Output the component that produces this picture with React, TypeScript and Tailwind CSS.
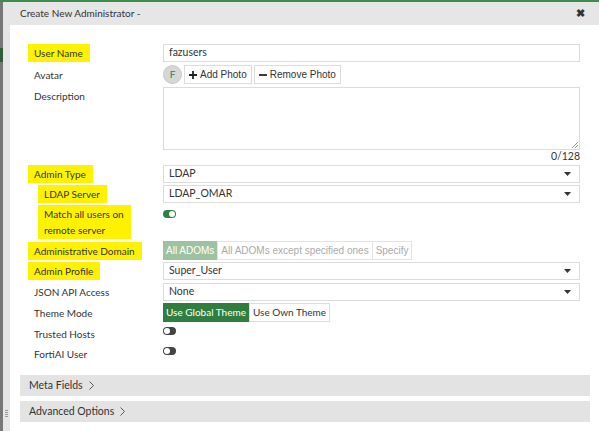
import React from 'react';

const lato = { fontFamily: 'Lato, "Liberation Sans", sans-serif' };
const arial = { fontFamily: '"Liberation Sans", Arial, sans-serif' };

function Label({ text, hl, indent }: { text: React.ReactNode; hl?: boolean; indent?: boolean }) {
  return (
    <div className={`w-[129px] shrink-0 text-[10px] ${indent ? 'pl-[10px]' : ''}`}>
      <span className={`inline-block leading-[16px] ${hl ? 'bg-[#fff200] -ml-[6px] pl-[6px] pr-[7px] py-[1px]' : ''}`}>
        {text}
      </span>
    </div>
  );
}

function Select({ value }: { value: string }) {
  return (
    <div className="flex-1 h-[18px] border border-[#dcdcdc] bg-white flex items-center justify-between pl-[5px] pr-[8px] text-[#333]">
      <span>{value}</span>
      <svg width="7" height="4" viewBox="0 0 7 4"><path d="M0 0h7L3.5 4z" fill="#333" /></svg>
    </div>
  );
}

function Toggle({ on }: { on?: boolean }) {
  return (
    <div className={`w-[13px] h-[8px] rounded-full flex items-center px-[1px] ${on ? 'bg-[#2e8040] justify-end' : 'bg-[#444] justify-start'}`}>
      <div className="w-[6px] h-[6px] rounded-full bg-white" />
    </div>
  );
}

export default function App() {
  return (
    <div className="w-[599px] h-[431px] overflow-hidden bg-[#6c6c6c] relative text-[10.5px] text-[#333]" style={lato}>
      <div className="h-[2px] bg-[#3d8c4c]" />
      <div className="flex h-[429px]">
        <div className="w-[3px] flex flex-col">
          <div className="h-[46px] bg-[#777]" />
          <div className="h-[14px] bg-[#2f5f3a]" />
          <div className="flex-1 bg-[#777]" />
        </div>
        <div className="flex-1 flex flex-col bg-[#e6e6e6]">
          <div className="h-[23px] flex items-center justify-between pl-[17px] pr-[14px] text-[10px] text-[#333]">
            <span>Create New Administrator -</span>
            <span className="text-[11px] font-bold" style={arial}>✖</span>
          </div>
          <div className="flex flex-1">
            <div className="w-[7px] flex flex-col items-center justify-end pb-[14px]">
              <div className="flex flex-col gap-[1px]">
                <div className="w-[3px] h-[1px] bg-[#999]" />
                <div className="w-[3px] h-[1px] bg-[#999]" />
                <div className="w-[3px] h-[1px] bg-[#999]" />
                <div className="w-[3px] h-[1px] bg-[#999]" />
              </div>
            </div>
            <div className="flex-1 bg-white pt-[19px]">
              <div className="pl-[24px] pr-[19px] flex flex-col">
                <div className="flex items-center h-[18px]">
                  <Label text="User Name" hl />
                  <div className="flex-1 h-[18px] border border-[#dcdcdc] flex items-center pl-[5px]">fazusers</div>
                </div>
                <div className="flex items-center h-[19px] mt-[3px]">
                  <Label text="Avatar" />
                  <div className="flex items-center gap-[2px] text-[10px]" style={arial}>
                    <div className="w-[19px] h-[19px] rounded-full bg-[#d6d6d6] border border-[#c8c8c8] flex items-center justify-center text-[#3c7d4a] text-[10px]" style={lato}>F</div>
                    <div className="h-[19px] border border-[#dcdcdc] flex items-center px-[4px] gap-[3px] text-[#333]">
                      <svg width="8" height="8" viewBox="0 0 9 9"><path d="M3.5 0h2v3.5H9v2H5.5V9h-2V5.5H0v-2h3.5z" fill="#222" /></svg>
                      <span>Add Photo</span>
                    </div>
                    <div className="h-[19px] border border-[#dcdcdc] flex items-center px-[4px] gap-[3px] text-[#333]">
                      <svg width="8" height="8" viewBox="0 0 9 9"><path d="M0 3.5h9v2H0z" fill="#222" /></svg>
                      <span>Remove Photo</span>
                    </div>
                  </div>
                </div>
                <div className="flex mt-[3px]">
                  <Label text={<span className="block pt-[1px]">Description</span>} />
                  <div className="flex-1 flex flex-col">
                    <div className="h-[63px] border border-[#dcdcdc] relative">
                      <svg className="absolute right-[1px] bottom-[1px]" width="6" height="6" viewBox="0 0 6 6"><path d="M6 0L0 6M6 3L3 6" stroke="#999" strokeWidth="1" /></svg>
                    </div>
                    <div className="text-right leading-[13px] text-[#333]">0/128</div>
                  </div>
                </div>
                <div className="flex items-center h-[18px] mt-[2px]">
                  <Label text="Admin Type" hl />
                  <Select value="LDAP" />
                </div>
                <div className="flex items-center h-[18px] mt-[2px]">
                  <Label text="LDAP Server" hl indent />
                  <Select value="LDAP_OMAR" />
                </div>
                <div className="flex mt-[2px] h-[33px]">
                  <Label text={<>Match all users on<br />remote server</>} hl indent />
                  <div className="pt-[5px]"><Toggle on /></div>
                </div>
                <div className="flex items-center h-[19px] mt-[3px]">
                  <Label text="Administrative Domain" hl />
                  <div className="flex h-[19px] text-[10px]" style={arial}>
                    <div className="bg-[#9cc29f] text-white px-[3px] flex items-center">All ADOMs</div>
                    <div className="border border-[#e3e3e3] text-[#aaa] px-[3px] flex items-center">All ADOMs except specified ones</div>
                    <div className="border border-l-0 border-[#e3e3e3] text-[#aaa] px-[3px] flex items-center">Specify</div>
                  </div>
                </div>
                <div className="flex items-center h-[18px] mt-[2px]">
                  <Label text="Admin Profile" hl />
                  <Select value="Super_User" />
                </div>
                <div className="flex items-center h-[18px] mt-[3px]">
                  <Label text="JSON API Access" />
                  <Select value="None" />
                </div>
                <div className="flex items-center h-[19px] mt-[2px]">
                  <Label text="Theme Mode" />
                  <div className="flex h-[19px] text-[10px]">
                    <div className="bg-[#2f7d3f] text-white px-[3px] flex items-center">Use Global Theme</div>
                    <div className="border border-[#dcdcdc] px-[3px] flex items-center">Use Own Theme</div>
                  </div>
                </div>
                <div className="flex items-center h-[18px] mt-[3px]">
                  <Label text="Trusted Hosts" />
                  <div className="-mt-[6px]"><Toggle /></div>
                </div>
                <div className="flex items-center h-[18px] mt-[2px]">
                  <Label text="FortiAI User" />
                  <div className="-mt-[6px]"><Toggle /></div>
                </div>
              </div>
              <div className="pl-[10px] pr-[9px] mt-[12px] flex flex-col gap-[5px]">
                <div className="h-[21px] bg-[#e3e3e3] flex items-center pl-[9px] gap-[6px] text-[10.5px]">
                  <span>Meta Fields</span>
                  <svg width="5" height="9" viewBox="0 0 5 9"><path d="M0.5 0.5L4.5 4.5L0.5 8.5" stroke="#555" fill="none" /></svg>
                </div>
                <div className="h-[21px] bg-[#e3e3e3] flex items-center pl-[9px] gap-[6px] text-[10.5px]">
                  <span>Advanced Options</span>
                  <svg width="5" height="9" viewBox="0 0 5 9"><path d="M0.5 0.5L4.5 4.5L0.5 8.5" stroke="#555" fill="none" /></svg>
                </div>
              </div>
            </div>
          </div>
        </div>
      </div>
    </div>
  );
}
